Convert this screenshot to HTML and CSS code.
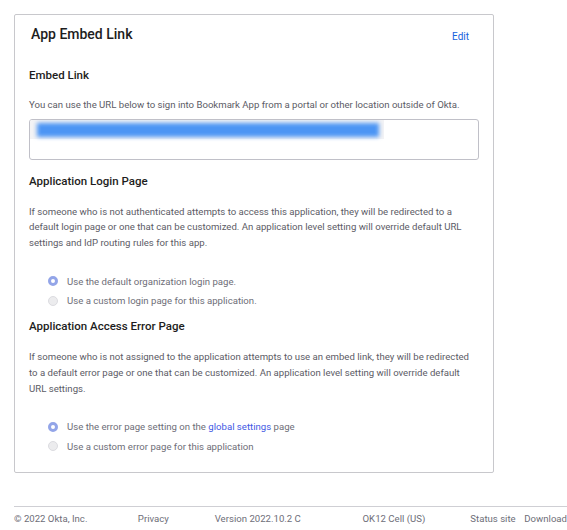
FILE: index.html
```html
<!DOCTYPE html>
<html lang="en">

<head>
    <meta charset="UTF-8">
    <meta name="viewport" content="width=device-width, initial-scale=1.0">
    <title>App Embed Link</title>
    <link rel="stylesheet" href="styles.css">
</head>

<body>
    <div class="card">
        <div class="card-head">
            <h2>App Embed Link</h2>
            <a href="#" class="edit">Edit</a>
        </div>

        <h3 class="first">Embed Link</h3>
        <p class="one-line">You can use the URL below to sign into Bookmark App from a portal or other location outside of Okta.</p>
        <div class="url-box">
            <div class="url-select"><span class="url-blur"></span></div>
        </div>

        <h3>Application Login Page</h3>
        <p>If someone who is not authenticated attempts to access this application, they will be redirected to a
            default login page or one that can be customized. An application level setting will override default URL
            settings and IdP routing rules for this app.</p>
        <div class="radios">
            <label class="radio"><span class="dot checked"></span><span>Use the default organization login page.</span></label>
            <label class="radio"><span class="dot"></span><span>Use a custom login page for this application.</span></label>
        </div>

        <h3>Application Access Error Page</h3>
        <p>If someone who is not assigned to the application attempts to use an embed link, they will be redirected
            to a default error page or one that can be customized. An application level setting will override default
            URL settings.</p>
        <div class="radios">
            <label class="radio"><span class="dot checked"></span><span>Use the error page setting on the <a href="#" class="link">global settings</a> page</span></label>
            <label class="radio"><span class="dot"></span><span>Use a custom error page for this application</span></label>
        </div>
    </div>

    <footer class="footer">
        <span class="f-copy">&copy; 2022 Okta, Inc.</span>
        <a href="#" class="f-privacy">Privacy</a>
        <span class="f-version">Version 2022.10.2 C</span>
        <span class="f-cell">OK12 Cell (US)</span>
        <a href="#" class="f-status">Status site</a>
        <a href="#">Download</a>
    </footer>
</body>

</html>
```

FILE: styles.css
```css
body {
    margin: 0;
    padding: 14px 0 0 14px;
    font-family: Roboto, "Liberation Sans", sans-serif;
    color: #1d1d21;
    background-color: #ffffff;
    overflow: hidden;
}

.card {
    width: 480px;
    box-sizing: border-box;
    border: 1px solid #c8c8cc;
    border-radius: 2px;
    padding: 10px 16px 16px 14px;
}

.card-head {
    display: flex;
    justify-content: space-between;
    align-items: center;
}

.card-head h2 {
    margin: 0 0 0 2px;
    font-size: 14px;
    line-height: 18px;
    font-weight: 500;
}

.edit {
    color: #1662dd;
    font-size: 10px;
    text-decoration: none;
    margin: 4px 8px 0 0;
}

h3 {
    margin: 9px 0 0 0;
    font-size: 11.5px;
    line-height: 16px;
    font-weight: 500;
}

h3.first {
    margin-top: 24px;
}

p {
    margin: 15px 0 0 0;
    font-size: 9.6px;
    line-height: 15.6px;
    color: #5c5c66;
}

p.one-line {
    margin-top: 14px;
}

.url-box {
    margin: 6px -2px 0 0;
    height: 41px;
    box-sizing: border-box;
    border: 1px solid #c0c0c8;
    border-radius: 3px;
    overflow: hidden;
}

.url-select {
    width: 355px;
    height: 20px;
    margin: -1px 0 0 -1px;
    background-color: #f3f3f5;
    padding: 4px 0 0 8px;
    box-sizing: border-box;
}

.url-blur {
    display: block;
    width: 342px;
    height: 14px;
    background-color: #4c95f4;
    filter: blur(2px);
}

.url-box + h3 {
    margin-top: 13px;
}

.radios {
    margin: 21px 0 0 0;
    display: flex;
    flex-direction: column;
}

.radio {
    display: flex;
    align-items: center;
    height: 19.5px;
    padding-left: 19px;
    font-size: 9.6px;
    color: #6e6e78;
}

.dot {
    width: 10px;
    height: 10px;
    border-radius: 50%;
    box-sizing: border-box;
    background-color: #ececee;
    border: 1px solid #dcdce0;
    margin-right: 9px;
}

.dot.checked {
    background-color: #ffffff;
    border: 3px solid #93a5e8;
}

.link {
    color: #3f59e4;
    text-decoration: none;
}

.radios + h3 {
    margin-top: 8px;
}

.footer {
    margin-top: 33px;
    border-top: 1px solid #cfcfd4;
    display: flex;
    padding-top: 6px;
    font-size: 9.6px;
    color: #6e6e78;
    white-space: nowrap;
}

.footer a {
    color: #6e6e78;
    text-decoration: none;
}

.f-copy {
    width: 124px;
}

.f-privacy {
    width: 77px;
}

.f-version {
    width: 148px;
}

.f-cell {
    width: 108px;
}

.f-status {
    width: 54px;
}
```
